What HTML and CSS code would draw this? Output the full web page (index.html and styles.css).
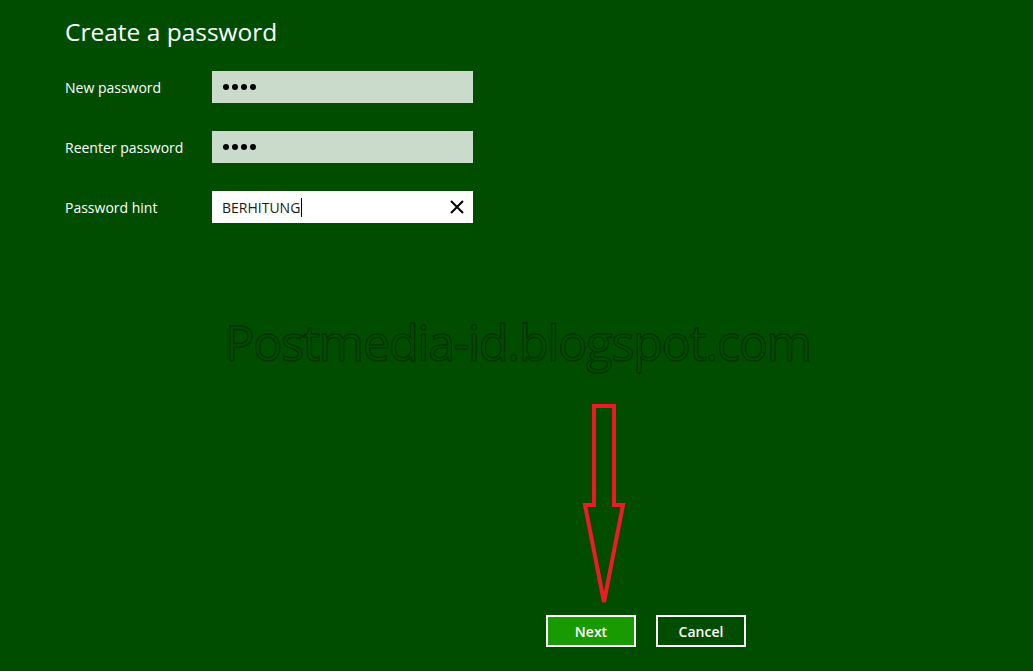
FILE: index.html
```html
<!DOCTYPE html>
<html lang="en">
<head>
    <meta charset="UTF-8">
    <title>Create a password</title>
    <link rel="stylesheet" href="styles.css">
</head>
<body>
    <div class="screen">
        <h1>Create a password</h1>
        <div class="form-row">
            <label for="pass1">New password</label>
            <div class="field filled" id="pass1">
                <span class="dot"></span><span class="dot"></span><span class="dot"></span><span class="dot"></span>
            </div>
        </div>
        <div class="form-row">
            <label for="pass2">Reenter password</label>
            <div class="field filled" id="pass2">
                <span class="dot"></span><span class="dot"></span><span class="dot"></span><span class="dot"></span>
            </div>
        </div>
        <div class="form-row">
            <label for="hint">Password hint</label>
            <div class="field active" id="hint">
                <span class="hint-text">BERHITUNG</span><span class="caret"></span>
                <svg class="clear" width="14" height="14" viewBox="0 0 14 14">
                    <path d="M1 1 L13 13 M13 1 L1 13" stroke="#000" stroke-width="2"/>
                </svg>
            </div>
        </div>

        <div class="actions">
            <button class="btn primary">Next</button>
            <button class="btn">Cancel</button>
        </div>

        <div class="watermark">Postmedia-id.blogspot.com</div>

        <!-- red pointer drawn over the page -->
        <svg class="pointer" width="50" height="206" viewBox="0 0 50 206">
            <path d="M12 4 H32 V103 H41 L22 200 L3 103 H12 Z" fill="none" stroke="#ed1c24" stroke-width="4" stroke-linejoin="miter"/>
        </svg>
    </div>
</body>
</html>
```

FILE: styles.css
```css
body {
    margin: 0;
    background: #004d00;
    font-family: "Open Sans", "Noto Sans", sans-serif;
    color: #fff;
}
.screen {
    position: relative;
    height: 671px;
    box-sizing: border-box;
    padding: 14px 0 0 65px;
    display: flex;
    flex-direction: column;
    overflow: hidden;
}
h1 {
    margin: 0 0 21px;
    font-size: 24.5px;
    font-weight: 400;
    line-height: 36px;
}
.form-row {
    display: flex;
    align-items: center;
    height: 32px;
    margin-bottom: 28px;
}
.form-row label {
    width: 147px;
    font-size: 14px;
}
.field {
    width: 261px;
    height: 32px;
    box-sizing: border-box;
    padding: 0 9px 0 11px;
    display: flex;
    align-items: center;
    color: #000;
}
.field.filled {
    background: #cbdbcb;
}
.field.active {
    background: #fff;
    padding-left: 10px;
}
.dot {
    width: 6px;
    height: 6px;
    border-radius: 50%;
    background: #000;
    margin-right: 3px;
}
.hint-text {
    font-size: 14px;
    color: #1a1a1a;
}
.caret {
    width: 1px;
    height: 19px;
    margin-left: 1px;
    background: #000;
}
.clear {
    margin-left: auto;
}
.actions {
    margin-top: auto;
    margin-bottom: 24px;
    margin-left: 481px;
    display: flex;
    gap: 20px;
}
.btn {
    width: 90px;
    height: 32px;
    border: 2px solid #fff;
    background: #004d00;
    color: #fff;
    font-family: "Open Sans", "Noto Sans", sans-serif;
    font-size: 14px;
    font-weight: 600;
    padding: 0;
}
.btn.primary {
    background: #189a00;
}
.watermark {
    position: absolute;
    left: 225px;
    top: 310px;
    font-size: 49px;
    line-height: 64px;
    color: transparent;
    -webkit-text-stroke: 1.5px #003300;
    letter-spacing: -1.5px;
    white-space: nowrap;
}
.pointer {
    position: absolute;
    left: 582px;
    top: 402px;
}
```
